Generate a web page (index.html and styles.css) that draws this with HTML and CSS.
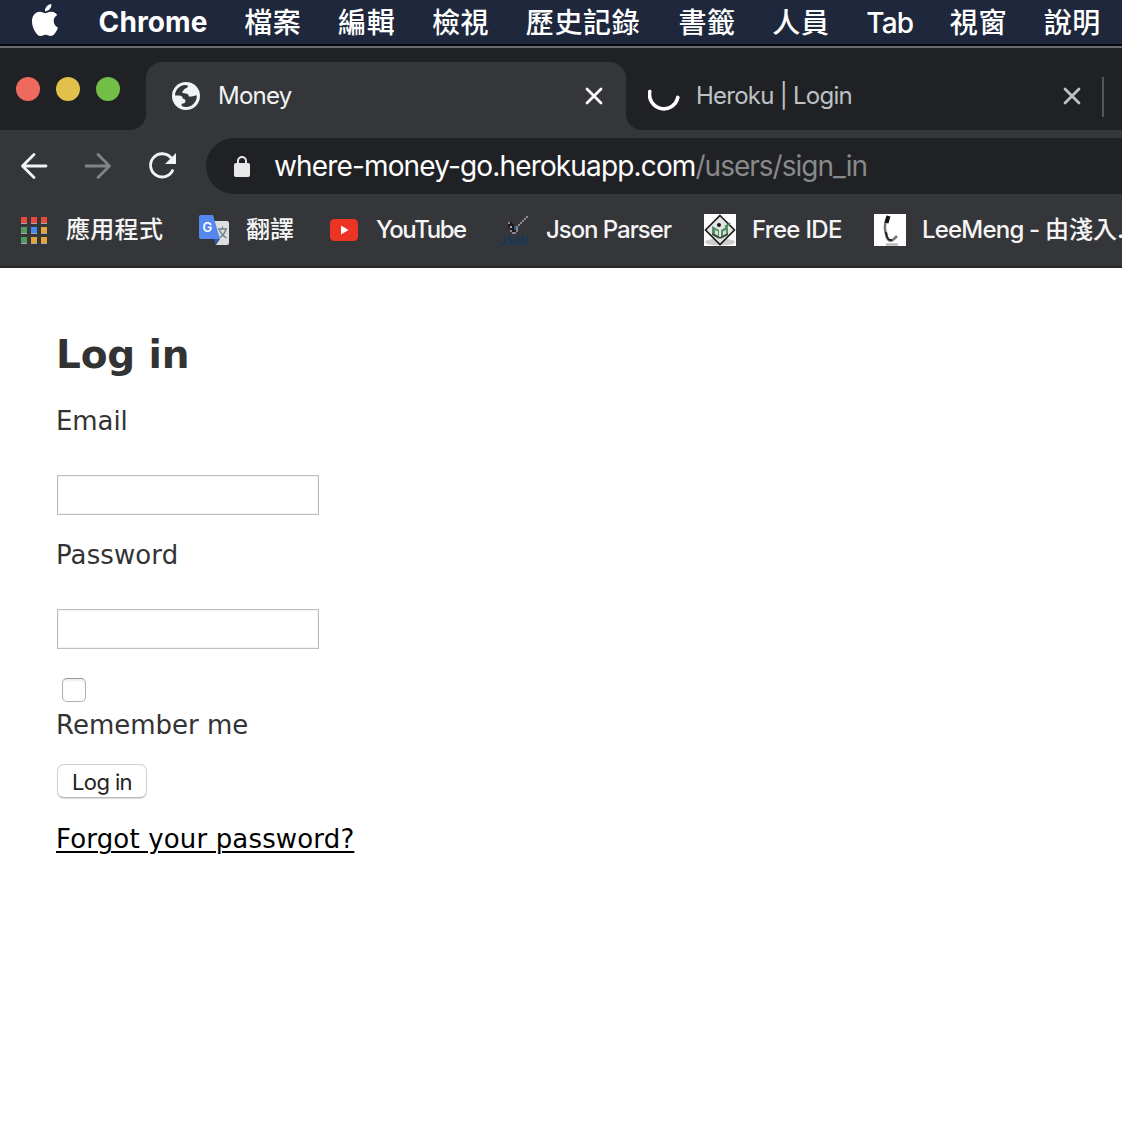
FILE: index.html
```html
<!DOCTYPE html>
<html lang="zh-Hant">
<head>
<meta charset="utf-8">
<title>Money</title>
<link rel="stylesheet" href="styles.css">
</head>
<body>
<nav class="menubar">
  <svg class="apple" viewBox="0 0 24 24"><path d="M12.152 6.896c-.948 0-2.415-1.078-3.960-1.040-2.040.027-3.910 1.183-4.961 3.014-2.117 3.675-.546 9.103 1.519 12.090 1.013 1.454 2.208 3.090 3.792 3.039 1.520-.065 2.090-.987 3.935-.987 1.831 0 2.350.987 3.960.948 1.637-.026 2.676-1.480 3.676-2.948 1.156-1.688 1.636-3.325 1.662-3.415-.039-.013-3.182-1.221-3.220-4.857-.026-3.040 2.480-4.494 2.597-4.559-1.429-2.090-3.623-2.324-4.390-2.376-2-.156-3.675 1.090-4.610 1.090zM15.530 3.830c.843-1.012 1.400-2.427 1.245-3.830-1.207.052-2.662.805-3.532 1.818-.780.896-1.454 2.338-1.273 3.714 1.338.104 2.715-.688 3.559-1.701z"/></svg>
  <span class="menu app">Chrome</span>
  <span class="menu">檔案</span>
  <span class="menu">編輯</span>
  <span class="menu">檢視</span>
  <span class="menu long">歷史記錄</span>
  <span class="menu">書籤</span>
  <span class="menu">人員</span>
  <span class="menu latin">Tab</span>
  <span class="menu">視窗</span>
  <span class="menu">說明</span>
</nav>
<header class="browser">
  <div class="tabstrip">
    <div class="lights"><i class="light red"></i><i class="light yellow"></i><i class="light green"></i></div>
    <div class="tab-slot">
      <div class="tab">
        <svg class="globe" viewBox="0 0 28 28"><circle cx="14" cy="14" r="14" fill="#f1f3f4"/><path d="M3 13.500C3.200 8 7.500 3.400 13 3.100l3 .5c-.2 1.800-.8 2.600-2.600 2.800-1.500.2-1.400 2-2.800 2.600-.6 1.600-.2 2.200 1.400 2.300 3 0 4.600.6 4.800 3.200h3l4.900-1.300c.8 6-4.200 11.600-10.300 11.700-1.700.1-3.400-.3-4.700-1v-2.200c1.700 0 3.300-.3 3.600-1.900.4-1.700-.4-2.900-2.300-3-.8-2.300-1.400-3.300-3.600-3.300z" fill="#35363a"/></svg>
        <span class="tab-title">Money</span>
        <svg class="close" viewBox="0 0 20 20"><path d="M3 3l14 14M17 3L3 17"/></svg>
      </div>
    </div>
    <div class="tab-idle">
      <svg class="spinner" viewBox="0 0 32 32"><path d="M1.800 11.600A14.200 14.200 0 1 0 29.800 17.400"/></svg>
      <span class="tab-title">Heroku | Login</span>
      <svg class="close" viewBox="0 0 20 20"><path d="M3 3l14 14M17 3L3 17"/></svg>
      <i class="divider"></i>
    </div>
  </div>
  <div class="toolbar">
    <svg class="nav-icon" viewBox="0 0 28 28"><path d="M26 14H3M14 2.500L2.500 14L14 25.500"/></svg>
    <svg class="nav-icon forward" viewBox="0 0 28 28"><path d="M2 14H25M14 2.500L25.500 14L14 25.500"/></svg>
    <svg class="nav-icon reload" viewBox="0 0 28 28"><path d="M23.300 6.200A11.600 11.600 0 1 0 25 17.500"/><path class="solid" d="M28 1v11H17z"/></svg>
    <div class="omnibox">
      <svg class="lock" viewBox="0 0 16 21"><rect y="7" width="16" height="14" rx="2"/><path d="M4 8V5a4 4 0 0 1 8 0v3"/></svg>
      <span class="url"><span class="host">where-money-go.herokuapp.com</span><span class="path">/users/sign_in</span></span>
    </div>
  </div>
  <div class="bookmarks">
    <svg class="bm-icon apps" viewBox="0 0 26 27">
      <g fill="#a6a6a6"><path d="M0 0h6v7H0zM10 0h6v7h-6zM20 0h6v7h-6zM0 10h6v7H0zM10 10h6v7h-6zM20 10h6v7h-6zM0 20h6v7H0zM10 20h6v7h-6zM20 20h6v7h-6z"/></g>
      <path fill="#e64a3b" d="M0 0h6v6H0zM10 0h6v6h-6zM20 0h6v6h-6z"/><path fill="#529b5f" d="M0 10h6v6H0zM0 20h6v6H0z"/><path fill="#4489ec" d="M10 10h6v6h-6z"/><path fill="#e4a438" d="M20 10h6v6h-6zM10 20h6v6h-6zM20 20h6v6h-6z"/>
    </svg>
    <span class="bm bm-apps">應用程式</span>
    <svg class="bm-icon translate" viewBox="0 0 30 30">
      <path d="M11 6h17q2 0 2 2v20q0 2-2 2H17z" fill="#dedede"/><path d="M15 24h6l-4 6z" fill="#3553b2"/><path d="M2 0h12l7 24H2q-2 0-2-2V2q0-2 2-2z" fill="#5488ed"/>
      <path d="M19 14h9M23.500 11.500V14M20.500 15q2 5 7 8M27 14q-1.500 6-7 9" fill="none" stroke="#64808a" stroke-width="1.300"/>
      <text x="3.500" y="16.500" font-family="Inter, sans-serif" font-size="13" font-weight="600" fill="#fff">G</text>
    </svg>
    <span class="bm bm-translate">翻譯</span>
    <svg class="bm-icon youtube" viewBox="0 0 28 22"><rect width="28" height="22" rx="4.500" fill="#ed3324"/><path d="M11 6.500v9l7.500-4.500z" fill="#fff"/></svg>
    <span class="bm bm-youtube">YouTube</span>
    <svg class="bm-icon json" viewBox="0 0 32 32">
      <path d="M10 8h4v2h2v4h4v4h-2v2h-4v-2h-2v-4h-2z" fill="#1b1a20"/>
      <path d="M10 8h2v2h-2zM14 18h4v2h-4zM18 16h2v2h-2zM12 16h2v2h-2z" fill="#8c8494"/>
      <path d="M18 12h2v-2h2V8h2V6h2V4h2V2h2v2h-2v2h-2v2h-2v2h-2v2h-2v4h-2z" fill="#8b8592"/>
      <path d="M20 8h2V6h2V4h2V2h2V0h2v2h-2v2h-2v2h-2v2h-2v2h-2z" fill="#3d3a42"/>
      <path d="M16 12h2v4h-2z" fill="#31568d"/><path d="M12 12h2v2h-2z" fill="#c0a779"/>
      <text x="1" y="31" textLength="29" lengthAdjust="spacingAndGlyphs" font-family="DejaVu Sans Mono, monospace" font-size="12" font-weight="700" fill="#153858">JSON</text>
    </svg>
    <span class="bm bm-json">Json Parser</span>
    <svg class="bm-icon ide" viewBox="0 0 32 32">
      <path fill="#fff" d="M0 0h32v32H0z"/><ellipse cx="16" cy="28" rx="15" ry="3.500" fill="#ccc"/><path d="M16 1.500L30.500 16 16 30.500 1.500 16z" fill="#e4e4e4" stroke="#181818" stroke-width="1.600"/><path d="M8 12l7 4v9l-7-4zM24 12l-7 4v9l7-4z" fill="#548d65"/><path d="M11 16v4l3 1.500v-4zM19 17.500v4l3-1.500v-4z" fill="#d6e2d6"/><path d="M8 20l8 4 8-4" fill="none" stroke="#444" stroke-width="1.500"/><circle cx="15" cy="11" r="2" fill="#151515"/><path d="M21 13l5-4" stroke="#438b57" stroke-width="2"/>
    </svg>
    <span class="bm bm-ide">Free IDE</span>
    <svg class="bm-icon lee" viewBox="0 0 32 32"><path fill="#fff" d="M0 0h32v32H0z"/><path d="M14 2q-5 9-2 18 2 10 8 5l3-3" fill="none" stroke="#777" stroke-width="2.500"/><path d="M14.500 2l-2 7" stroke="#111" stroke-width="4"/><path d="M12 18q1 9 6 8" fill="none" stroke="#222" stroke-width="2"/><path d="M12 30.500h12" stroke="#bbb" stroke-width="2.500"/></svg>
    <span class="bm bm-lee">LeeMeng - <span class="han">由淺入.</span></span>
  </div>
</header>
<main class="page">
  <h2 class="heading">Log in</h2>
  <form class="form">
    <label class="label label-email" for="email">Email</label>
    <input class="field" id="email" type="email">
    <label class="label label-password" for="password">Password</label>
    <input class="field" id="password" type="password">
    <input class="check" id="remember" type="checkbox">
    <label class="label label-remember" for="remember">Remember me</label>
    <button class="submit" type="button">Log in</button>
  </form>
  <a class="forgot" href="#">Forgot your password?</a>
</main>
</body>
</html>
```
FILE: styles.css
```css
* { box-sizing: border-box; }
html, body { height: 100%; }
body { margin: 0; overflow: hidden; background: #fff; font-family: Inter, "Noto Sans CJK TC", sans-serif; }
svg { display: block; flex: none; }

.menubar { display: flex; align-items: center; gap: 37.600px; height: 44px; padding-left: 29px; background: #1e273c; color: #fff; font-size: 28px; line-height: 42px; white-space: nowrap; overflow: hidden; }
.apple { width: 32px; height: 32px; margin: -4px 0 0; fill: #fff; }
.menu { flex: none; width: 56.300px; padding-top: 2px; font-weight: 500; letter-spacing: .6px; }
.menu.app { width: 108px; padding-top: 0; font-weight: 700; letter-spacing: .1px; }
.menu.long { width: 115px; }
.menu.latin { width: 46px; padding: 2px 0 0; letter-spacing: -.8px; }

.browser { height: 222px; background: #35363a; border-top: 2px solid #6a6b6c; box-shadow: 0 -2px #05080e; margin-top: 2px; border-bottom: 2px solid #272528; }
.tabstrip { display: flex; height: 82px; border-top: 14px solid #202124; }
.lights { display: flex; gap: 16px; width: 146px; padding: 15px 0 0 16px; background: #202124; border-bottom-right-radius: 16px; }
.light { width: 24px; height: 24px; border-radius: 50%; }
.red { background: #ee6a5f; }
.yellow { background: #e1c04c; }
.green { background: #72be47; }
.tab-slot { width: 480px; background: #202124; }
.tab { display: flex; align-items: center; height: 68px; padding: 0 22px 0 26px; background: #35363a; border-radius: 16px 16px 0 0; }
.globe { width: 28px; height: 28px; margin-right: 18px; }
.tab-title { flex: 1; padding-bottom: 2px; font-size: 24px; color: #f1f3f4; letter-spacing: -.75px; white-space: nowrap; }
.close { width: 20px; height: 20px; fill: none; stroke: #fff; stroke-width: 2.800; stroke-linecap: round; }
.tab-idle { display: flex; flex: 1; align-items: center; padding-left: 22px; background: #202124; border-bottom-left-radius: 16px; }
.tab-idle .tab-title { color: #bdc1c6; }
.tab-idle .close { stroke: #bdc1c6; }
.spinner { width: 32px; height: 32px; margin-right: 16px; fill: none; stroke: #fff; stroke-width: 3.600; stroke-linecap: round; }
.divider { width: 2px; height: 40px; margin: 2px 18px 0 20px; background: #55575a; }

.toolbar { display: flex; align-items: center; height: 72px; padding-left: 20px; }
.nav-icon { width: 28px; height: 28px; margin-right: 36px; fill: none; stroke: #f1f3f4; stroke-width: 2.800; stroke-linecap: round; stroke-linejoin: round; }
.forward { stroke: #828386; }
.reload { margin-right: 30px; stroke-linecap: butt; }
.solid { fill: #f1f3f4; stroke: none; }
.omnibox { display: flex; flex: 1; align-items: center; height: 56px; padding-left: 28px; background: #202124; border-radius: 28px 0 0 28px; }
.lock { width: 16px; height: 21px; margin-right: 24px; fill: #e8e8e8; }
.lock path { fill: none; stroke: #e8e8e8; stroke-width: 2; }
.url { font-size: 28px; letter-spacing: -.85px; white-space: nowrap; }
.host { color: #fff; }
.path { color: #88898b; letter-spacing: -1px; }

.bookmarks { display: flex; align-items: center; height: 56px; padding-left: 21px; overflow: hidden; color: #f5f5f5; font-size: 24px; font-weight: 500; line-height: 36px; white-space: nowrap; }
.bm { flex: none; height: 36px; }
.apps { width: 26px; height: 27px; margin-right: 19px; }
.bm-apps { width: 133px; letter-spacing: .3px; }
.translate { width: 30px; height: 30px; margin-right: 17px; }
.bm-translate { width: 84px; }
.youtube { width: 28px; height: 22px; margin-right: 18px; }
.bm-youtube { width: 122px; letter-spacing: -1.400px; }
.json { width: 32px; height: 32px; margin-right: 16px; overflow: visible; }
.bm-json { width: 158px; letter-spacing: -1.050px; }
.ide { width: 32px; height: 32px; margin-right: 16px; }
.bm-ide { width: 122px; letter-spacing: -.7px; }
.lee { width: 32px; height: 32px; margin-right: 16px; }
.bm-lee { letter-spacing: -.8px; }
.han { letter-spacing: 0; }

.page { padding: 63px 0 0 57px; color: #333; font-family: "DejaVu Sans", sans-serif; font-size: 26px; line-height: 36px; }
.heading { margin: 0 0 24px -1px; font-size: 39px; line-height: 48px; letter-spacing: -.15px; }
.form { display: flex; flex-direction: column; align-items: flex-start; }
.label { height: 36px; margin-left: -1px; }
.label-email { letter-spacing: -.1px; }
.label-password { letter-spacing: .1px; }
.field { width: 262px; height: 40px; margin: 36px 0 22px; border: 1px solid #bdbdbd; box-shadow: inset 0 0 0 1px #f3f3f3; background: #fff; outline: 0; }
.check { appearance: none; width: 24px; height: 24px; margin: 7px 0 5px 5px; border: 1px solid #b0b0b0; border-top-color: #999; border-radius: 5px; background: #fff; box-shadow: inset 0 2px 2px #eee; }
.submit { width: 90px; height: 34px; margin: 21px 0 23px; padding: 0; border: 1px solid #d2d2d2; border-bottom-color: #b8b8b8; border-radius: 7px; background: #fff; box-shadow: 0 1px 1px #ddd; color: #222; font: 22px/34px Inter, sans-serif; letter-spacing: -.6px; }
.forgot { margin-left: -1px; color: #000; letter-spacing: .16px; text-decoration-thickness: 2px; text-underline-offset: 3px; }
```
